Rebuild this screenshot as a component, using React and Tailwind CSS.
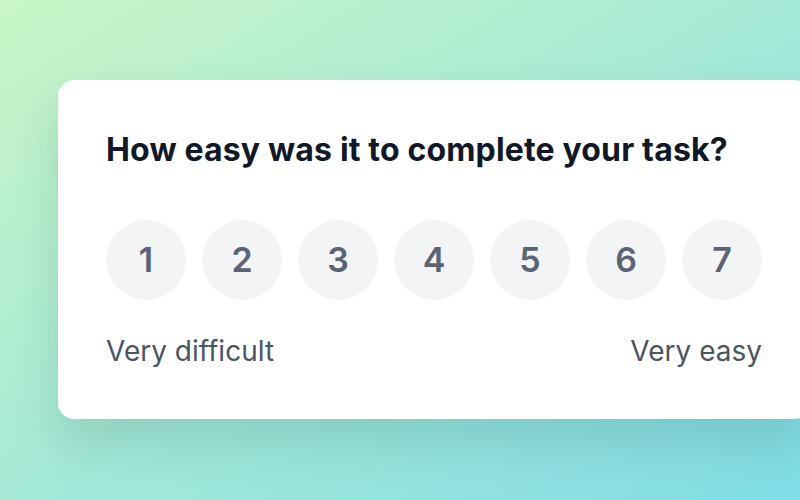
export default function App() {
  const nums = [1, 2, 3, 4, 5, 6, 7];
  return (
    <div
      className="w-[800px] h-[500px] overflow-hidden bg-gradient-to-br from-[#c8f6c6] to-[#80dce6] pt-[80px] pl-[58px]"
      style={{ fontFamily: "Inter, 'Noto Sans', sans-serif" }}
    >
      <div className="w-[752px] h-[339px] bg-white rounded-2xl shadow-[0_24px_48px_rgba(0,60,60,0.14)] px-12 pt-[50px]">
        <h1 className="text-[32px] leading-[40px] font-bold text-[#111827] whitespace-nowrap tracking-[0.16px]">
          How easy was it to complete your task?
        </h1>
        <div className="flex gap-4 mt-[50px]">
          {nums.map((n) => (
            <div
              key={n}
              className="w-20 h-20 rounded-full bg-[#f3f4f6] flex items-center justify-center text-[34px] leading-none font-semibold text-[#5b6377]"
            >
              {n}
            </div>
          ))}
        </div>
        <div className="flex justify-between mt-[33px] text-[28px] leading-[36px] text-[#4b5563]">
          <span>Very difficult</span>
          <span>Very easy</span>
        </div>
      </div>
    </div>
  );
}
